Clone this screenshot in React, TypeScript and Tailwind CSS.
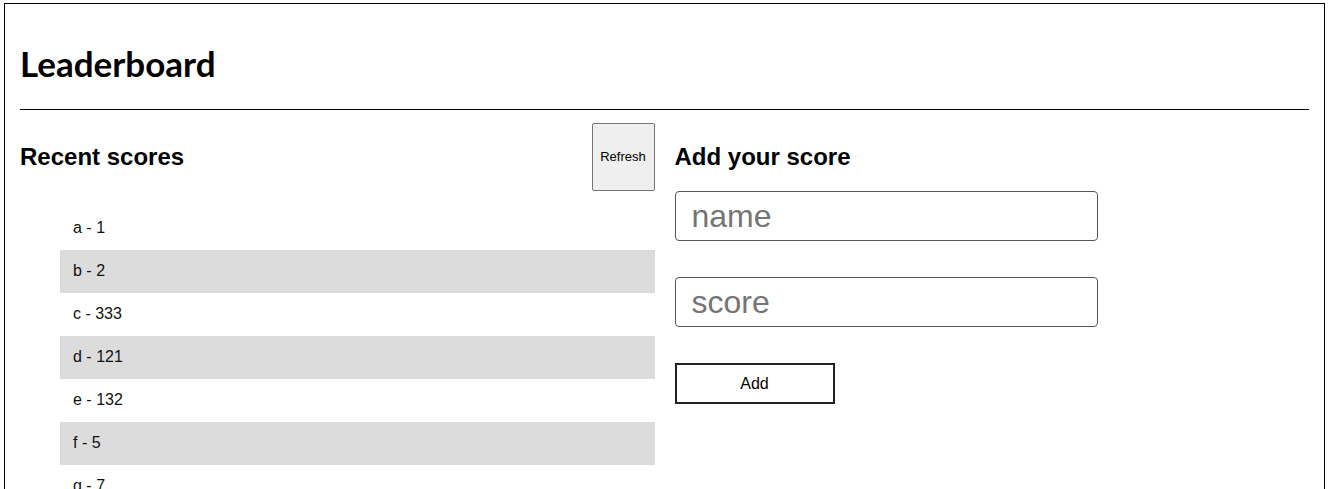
const scores = [
  { name: 'a', score: 1 },
  { name: 'b', score: 2 },
  { name: 'c', score: 333 },
  { name: 'd', score: 121 },
  { name: 'e', score: 132 },
  { name: 'f', score: 5 },
  { name: 'g', score: 7 },
  { name: 'h', score: 8 },
];

export default function App() {
  return (
    <div className="min-h-screen bg-white pt-[3px] pl-[4px] pr-[6px] font-['Liberation_Sans',Arial,sans-serif] text-black">
      <div className="border border-black pl-[15px] pr-[15px]">
        <h1 className="mt-[39px] mb-[26px] font-['Lato',sans-serif] text-[35px] font-bold leading-[40px]">
          Leaderboard
        </h1>
        <hr className="border-0 border-t border-black" />

        <div className="mt-[13px] grid grid-cols-2 gap-5">
          <section>
            <div className="flex h-[68px] items-center justify-between">
              <h2 className="text-[24px] font-bold">Recent scores</h2>
              <button className="h-[68px] w-[63px] rounded-[2px] border border-[#767676] bg-[#efefef] text-[13px] text-black">
                Refresh
              </button>
            </div>
            <ul className="mt-4 pl-10">
              {scores.map((s, i) => (
                <li
                  key={s.name}
                  className={`flex h-[43px] items-center px-[13px] pb-[1px] text-base text-[#111] ${
                    i % 2 === 1 ? 'bg-[#dcdcdc]' : ''
                  }`}
                >
                  {s.name} - {s.score}
                </li>
              ))}
            </ul>
          </section>

          <section>
            <div className="flex h-[68px] items-center">
              <h2 className="text-[24px] font-bold">Add your score</h2>
            </div>
            <div className="flex flex-col items-start">
              <input
                placeholder="name"
                className="h-[50px] w-[423px] rounded-[4px] border border-[#555] px-4 text-[32px] placeholder:text-[#757575]"
              />
              <input
                placeholder="score"
                className="mt-9 h-[50px] w-[423px] rounded-[4px] border border-[#555] px-4 text-[32px] placeholder:text-[#757575]"
              />
              <button className="mt-9 h-[41px] w-[160px] border-2 border-[#222] bg-white text-base">
                Add
              </button>
            </div>
          </section>
        </div>
      </div>
    </div>
  );
}
